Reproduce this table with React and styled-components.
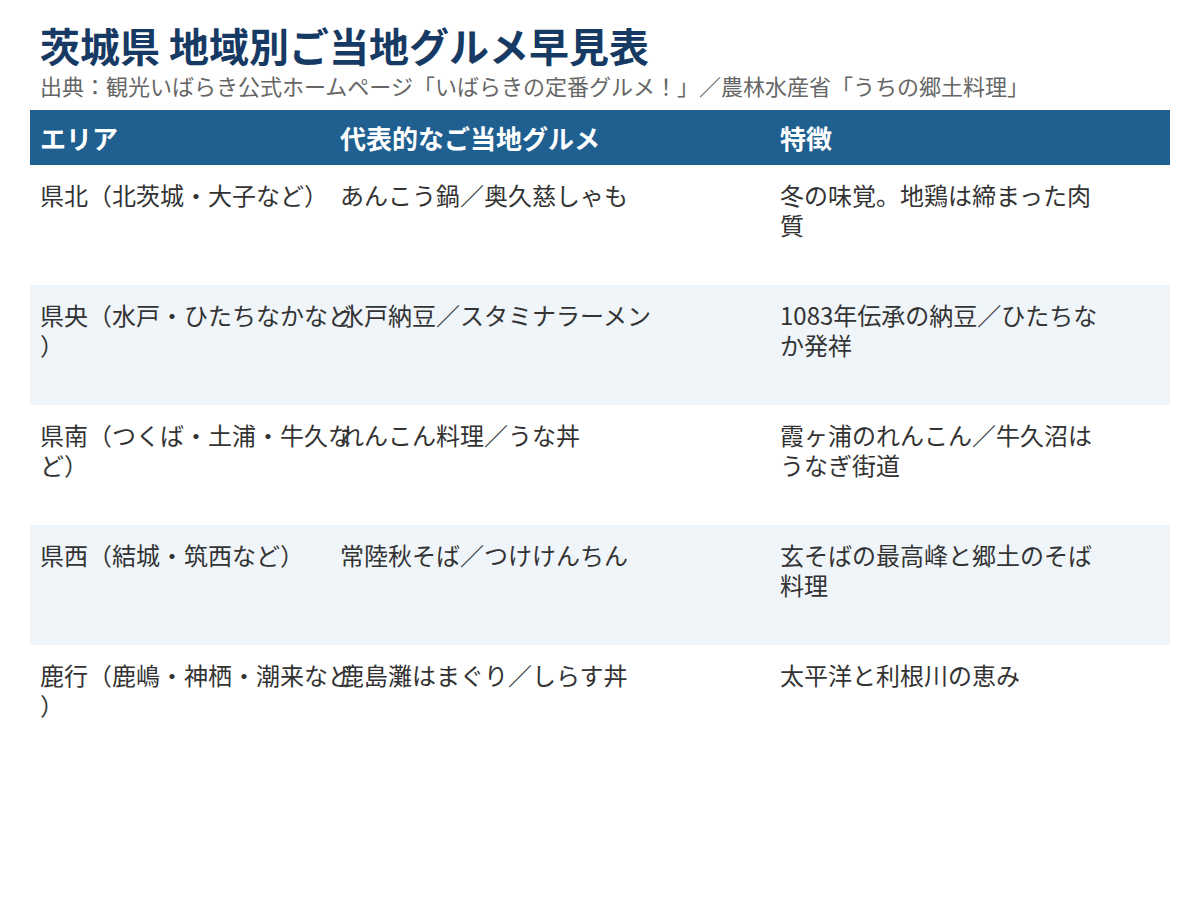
import React from 'react';
import styled, { createGlobalStyle } from 'styled-components';

const GlobalStyle = createGlobalStyle`
    body {
        margin: 0;
        background: #ffffff;
        font-family: "Noto Sans CJK JP", "Noto Sans", sans-serif;
        color: #333333;
    }
`;

const Page = styled.div`
    padding: 20px 30px;
    width: 1140px;
`;
const Title = styled.h1`
    margin: 0;
    padding-left: 10px;
    font-size: 40px;
    line-height: 50px;
    font-weight: 700;
    color: #163a63;
`;
const Source = styled.p`
    margin: 0;
    padding-left: 10px;
    font-size: 22px;
    line-height: 30px;
    color: #666666;
`;
const Table = styled.div`
    margin-top: 10px;
    display: flex;
    flex-direction: column;
`;
const Row = styled.div`
    display: grid;
    grid-template-columns: 300px 440px 400px;
    height: ${p => (p.$head ? '55px' : '120px')};
    background: ${p => (p.$head ? '#1f6091' : p.$alt ? '#f0f5fa' : '#ffffff')};
`;
const HeadCell = styled.div`
    color: #ffffff;
    font-weight: 700;
    font-size: 26px;
    padding: 0 10px;
    display: flex;
    align-items: center;
`;
const Cell = styled.div`
    padding: 15px 10px 0;
    font-size: 24px;
    line-height: 30px;
    color: #333333;
`;
const CellText = styled.div`
    width: 320px;
    line-break: anywhere;
    word-break: break-all;
`;

const rows = [
    ['県北（北茨城・大子など）', 'あんこう鍋／奥久慈しゃも', '冬の味覚。地鶏は締まった肉質'],
    ['県央（水戸・ひたちなかなど）', '水戸納豆／スタミナラーメン', '1083年伝承の納豆／ひたちなか発祥'],
    ['県南（つくば・土浦・牛久など）', 'れんこん料理／うな丼', '霞ヶ浦のれんこん／牛久沼はうなぎ街道'],
    ['県西（結城・筑西など）', '常陸秋そば／つけけんちん', '玄そばの最高峰と郷土のそば料理'],
    ['鹿行（鹿嶋・神栖・潮来など）', '鹿島灘はまぐり／しらす丼', '太平洋と利根川の恵み'],
];

export default function App() {
    return (
        <Page>
            <GlobalStyle />
            <Title>茨城県 地域別ご当地グルメ早見表</Title>
            <Source>出典：観光いばらき公式ホームページ「いばらきの定番グルメ！」／農林水産省「うちの郷土料理」</Source>
            <Table>
                <Row $head>
                    <HeadCell>エリア</HeadCell>
                    <HeadCell>代表的なご当地グルメ</HeadCell>
                    <HeadCell>特徴</HeadCell>
                </Row>
                {rows.map((r, i) => (
                    <Row key={i} $alt={i % 2 === 1}>
                        {r.map((t, j) => (
                            <Cell key={j}>
                                <CellText>{t}</CellText>
                            </Cell>
                        ))}
                    </Row>
                ))}
            </Table>
        </Page>
    );
}
